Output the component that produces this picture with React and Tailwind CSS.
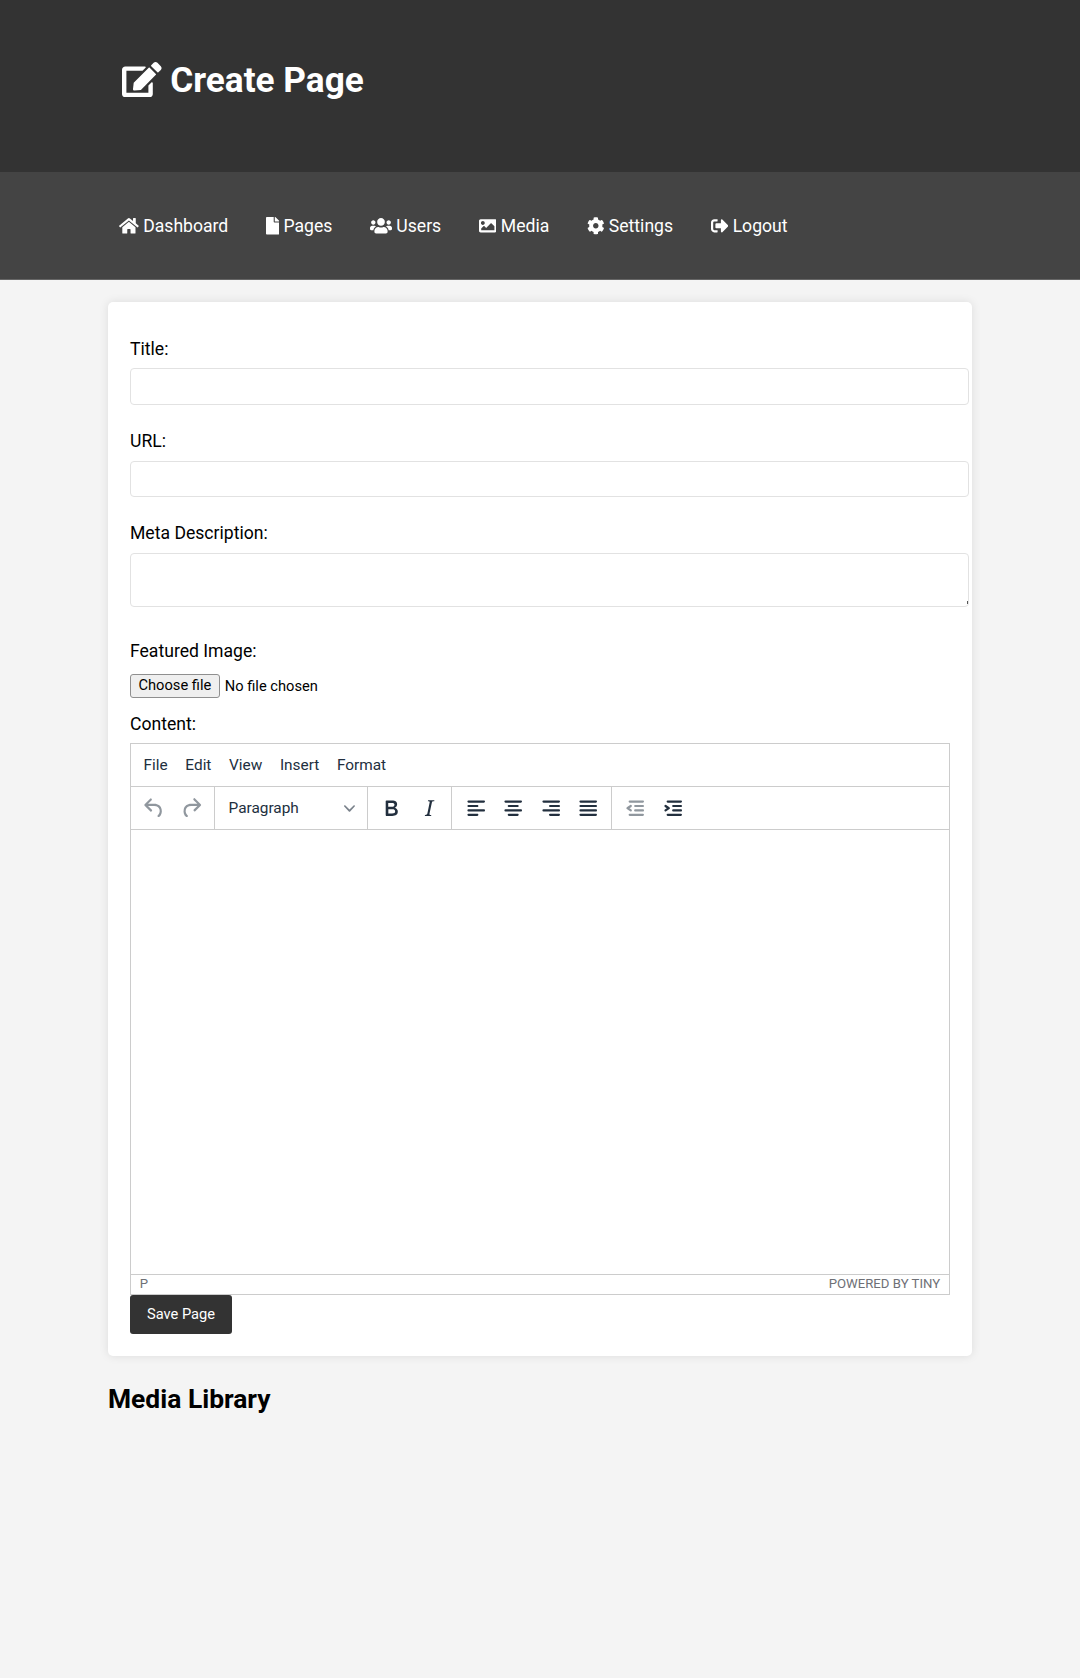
import React from 'react'
import { FaEdit, FaHome, FaFile, FaUsers, FaImage, FaCog, FaSignOutAlt } from 'react-icons/fa'

const navItems = [
  { icon: <FaHome className="h-[17.6px] w-[19.8px]" />, label: 'Dashboard' },
  { icon: <FaFile className="h-[17.6px] w-[13.2px]" />, label: 'Pages' },
  { icon: <FaUsers className="h-[17.6px] w-[22px]" />, label: 'Users' },
  { icon: <FaImage className="h-[17.6px] w-[17.6px]" />, label: 'Media' },
  { icon: <FaCog className="h-[17.6px] w-[17.6px]" />, label: 'Settings' },
  { icon: <FaSignOutAlt className="h-[17.6px] w-[17.6px]" />, label: 'Logout' },
]

const menuItems = ['File', 'Edit', 'View', 'Insert', 'Format']

// TinyMCE toolbar icons
const paths = {
  undo: 'M6.4 8H12c3.7 0 6.2 2 6.8 5.1.6 2.7-.4 5.6-2.3 6.8a1 1 0 0 1-1-1.8c1.1-.6 1.8-2.7 1.4-4.6-.5-2.1-2.1-3.5-4.9-3.5H6.4l3.3 3.3a1 1 0 1 1-1.4 1.4l-5-5a1 1 0 0 1 0-1.4l5-5a1 1 0 0 1 1.4 1.4L6.4 8Z',
  redo: 'M17.6 10H12c-2.8 0-4.4 1.4-4.9 3.5-.4 2 .3 4 1.4 4.6a1 1 0 1 1-1 1.8c-2-1.2-2.9-4.1-2.3-6.8.6-3 3-5.1 6.8-5.1h5.6l-3.3-3.3a1 1 0 1 1 1.4-1.4l5 5a1 1 0 0 1 0 1.4l-5 5a1 1 0 0 1-1.4-1.4l3.3-3.3Z',
  bold: 'M7.8 19c-.3 0-.5 0-.6-.2l-.2-.5V5.7c0-.2 0-.4.2-.5l.6-.2h5c1.5 0 2.7.3 3.5 1 .7.6 1.1 1.4 1.1 2.5a3 3 0 0 1-.6 1.9c-.4.6-1 1-1.6 1.2.4.1.9.3 1.3.6s.8.7 1 1.2c.4.4.5 1 .5 1.6 0 1.3-.4 2.3-1.3 3-.8.7-2.1 1-3.8 1H7.8Zm5-8.3c.6 0 1.2-.1 1.6-.5.4-.3.6-.7.6-1.3 0-1.1-.8-1.7-2.3-1.7H9.3v3.5h3.4Zm.5 6c.7 0 1.3-.1 1.7-.4.4-.4.6-.9.6-1.5s-.2-1-.7-1.4c-.4-.3-1-.4-2-.4H9.4v3.8h4Z',
  italic: 'M16.7 4.7l-.1.9h-.3c-.6 0-1 0-1.4.3-.3.3-.4.6-.5 1.1l-2.1 9.8v.6c0 .5.4.8 1.4.8h.2l-.2.8H8l.2-.8h.2c1.1 0 1.8-.5 2-1.5l2-9.8.1-.5c0-.6-.4-.8-1.4-.8h-.3l.2-.9h5.8Z',
  alignLeft: 'M5 5h14c.6 0 1 .4 1 1s-.4 1-1 1H5a1 1 0 1 1 0-2Zm0 4h8c.6 0 1 .4 1 1s-.4 1-1 1H5a1 1 0 1 1 0-2Zm0 8h8c.6 0 1 .4 1 1s-.4 1-1 1H5a1 1 0 0 1 0-2Zm0-4h14c.6 0 1 .4 1 1s-.4 1-1 1H5a1 1 0 0 1 0-2Z',
  alignCenter: 'M5 5h14c.6 0 1 .4 1 1s-.4 1-1 1H5a1 1 0 1 1 0-2Zm3 4h8c.6 0 1 .4 1 1s-.4 1-1 1H8a1 1 0 1 1 0-2Zm0 8h8c.6 0 1 .4 1 1s-.4 1-1 1H8a1 1 0 0 1 0-2Zm-3-4h14c.6 0 1 .4 1 1s-.4 1-1 1H5a1 1 0 0 1 0-2Z',
  alignRight: 'M5 5h14c.6 0 1 .4 1 1s-.4 1-1 1H5a1 1 0 1 1 0-2Zm6 4h8c.6 0 1 .4 1 1s-.4 1-1 1h-8a1 1 0 0 1 0-2Zm0 8h8c.6 0 1 .4 1 1s-.4 1-1 1h-8a1 1 0 0 1 0-2Zm-6-4h14c.6 0 1 .4 1 1s-.4 1-1 1H5a1 1 0 0 1 0-2Z',
  justify: 'M5 5h14c.6 0 1 .4 1 1s-.4 1-1 1H5a1 1 0 1 1 0-2Zm0 4h14c.6 0 1 .4 1 1s-.4 1-1 1H5a1 1 0 1 1 0-2Zm0 4h14c.6 0 1 .4 1 1s-.4 1-1 1H5a1 1 0 0 1 0-2Zm0 4h14c.6 0 1 .4 1 1s-.4 1-1 1H5a1 1 0 0 1 0-2Z',
  outdent: 'M7 5h12c.6 0 1 .4 1 1s-.4 1-1 1H7a1 1 0 1 1 0-2Zm5 4h7c.6 0 1 .4 1 1s-.4 1-1 1h-7a1 1 0 0 1 0-2Zm0 4h7c.6 0 1 .4 1 1s-.4 1-1 1h-7a1 1 0 0 1 0-2Zm-5 4h12a1 1 0 0 1 0 2H7a1 1 0 0 1 0-2Zm1.6-3.8a1 1 0 0 1-1.2 1.6l-3-2a1 1 0 0 1 0-1.6l3-2a1 1 0 0 1 1.2 1.6L6.8 12l1.8 1.2Z',
  indent: 'M7 5h12c.6 0 1 .4 1 1s-.4 1-1 1H7a1 1 0 1 1 0-2Zm5 4h7c.6 0 1 .4 1 1s-.4 1-1 1h-7a1 1 0 0 1 0-2Zm0 4h7c.6 0 1 .4 1 1s-.4 1-1 1h-7a1 1 0 0 1 0-2Zm-5 4h12a1 1 0 0 1 0 2H7a1 1 0 0 1 0-2Zm-2.6-3.8L6.2 12l-1.8-1.2a1 1 0 0 1 1.2-1.6l3 2a1 1 0 0 1 0 1.6l-3 2a1 1 0 1 1-1.2-1.6Z',
}

const ToolButton = ({ name, disabled }) => (
  <button type="button" className="flex h-[34px] w-[34px] items-center justify-center">
    <svg viewBox="0 0 24 24" className={`h-[26.4px] w-[26.4px] shrink-0 ${disabled ? 'fill-[#222f3e]/50' : 'fill-[#222f3e]'}`}>
      <path d={paths[name]} />
    </svg>
  </button>
)

const inputClass = 'block w-[839px] rounded-[4px] border border-[#e2e2e2] bg-white'

const App = () => {
  return (
    <div className="min-h-[1678px] bg-[#f4f4f4] font-['Roboto',sans-serif] text-black">
      <header className="h-[172px] bg-[#333333] pl-[122px] pt-[58px] text-white">
        <h1 className="flex items-center gap-[8.7px] text-[35.2px] font-bold leading-[42px]">
          <FaEdit className="h-[35.2px] w-[39.6px]" />
          <span className="mt-[1px]">Create Page</span>
        </h1>
      </header>

      <nav className="flex h-[108px] items-start gap-[37.6px] border-b border-[#666666] bg-[#444444] pl-[119px] pt-[43px] text-white">
        {navItems.map((item) => (
          <a key={item.label} className="flex items-center gap-[4.4px] text-[17.6px] leading-[21px]">
            {item.icon}
            <span className="mt-[1px]">{item.label}</span>
          </a>
        ))}
      </nav>

      <main className="mx-[108px] pt-[22px]">
        <form className="h-[1054px] rounded-[5px] bg-white p-[22px] shadow-[0_0_10px_rgba(0,0,0,0.1)]">
          <label className="block pt-[15px] text-[17.6px] leading-[21px]">Title:</label>
          <input className={`${inputClass} mt-[8px] h-[37px]`} />

          <label className="mt-[26px] block text-[17.6px] leading-[21px]">URL:</label>
          <input className={`${inputClass} mt-[9px] h-[36px]`} />

          <label className="mt-[26px] block text-[17.6px] leading-[21px]">Meta Description:</label>
          <div className="relative mt-[9px] w-[839px]">
            <textarea className={`${inputClass} h-[54px] resize-none`} />
            <span className="absolute bottom-[3px] right-[1px] h-[3px] w-[1px] bg-[#555555]" />
          </div>

          <label className="mt-[34px] block text-[17.6px] leading-[21px]">Featured Image:</label>
          <div className="mt-[12px] flex h-[24px] items-center pb-[1px] text-[14.67px]">
            <button type="button" className="h-[24px] shrink-0 rounded-[3px] border border-[#8f8f8f] bg-[#efefef] px-[7.5px] pb-[2px] text-[14.67px] leading-[20px]">
              Choose file
            </button>
            <span className="ml-[5px]">No file chosen</span>
          </div>

          <label className="mt-[16px] block text-[17.6px] leading-[21px]">Content:</label>

          <div className="mt-[8px] w-[820px] border border-[#cccccc] text-[#222f3e]">
            <div className="flex h-[43px] items-center gap-[17.6px] border-b border-[#cccccc] pl-[12.6px] pt-[1px] text-[15.4px]">
              {menuItems.map((m) => (
                <span key={m}>{m}</span>
              ))}
            </div>
            <div className="flex h-[43px] items-center border-b border-[#cccccc]">
              <div className="flex h-full items-center gap-[3.5px] border-r border-[#cccccc] pl-[6px] pr-[5px]">
                <ToolButton name="undo" disabled />
                <ToolButton name="redo" disabled />
              </div>
              <div className="flex h-full w-[153px] items-center justify-between border-r border-[#cccccc] pl-[14px] pr-[12px] pt-[1px] text-[15.4px]">
                <span>Paragraph</span>
                <svg viewBox="0 0 10 10" className="h-[11px] w-[11px] fill-[#222f3e]/60">
                  <path d="M8.7 2.2c.3-.3.8-.3 1 0 .4.2.4.7 0 1L5.6 7.8c-.3.3-.9.3-1.2 0L.2 3.2c-.3-.3-.3-.8 0-1 .3-.3.8-.3 1.1 0L5 6l3.7-3.8Z" />
                </svg>
              </div>
              <div className="flex h-full items-center gap-[3.5px] border-r border-[#cccccc] pl-[7px] pr-[5px]">
                <ToolButton name="bold" />
                <ToolButton name="italic" />
              </div>
              <div className="flex h-full items-center gap-[3.5px] border-r border-[#cccccc] pl-[7px] pr-[5px]">
                <ToolButton name="alignLeft" />
                <ToolButton name="alignCenter" />
                <ToolButton name="alignRight" />
                <ToolButton name="justify" />
              </div>
              <div className="flex h-full items-center gap-[3.5px] pl-[7px] pr-[5px]">
                <ToolButton name="outdent" disabled />
                <ToolButton name="indent" />
              </div>
            </div>
            <div className="h-[444px]" />
            <div className="flex h-[20px] items-center justify-between border-t border-[#cccccc] px-[8.8px] pb-[2px] text-[13.2px] text-[#6e7076]">
              <span>P</span>
              <span>POWERED BY TINY</span>
            </div>
          </div>

          <button type="button" className="block h-[39px] w-[102px] rounded-[3px] bg-[#333333] pb-[1px] text-[14.67px] text-white">
            Save Page
          </button>
        </form>

        <h2 className="mt-[26px] text-[26.4px] font-bold leading-[34px]">Media Library</h2>
      </main>
    </div>
  )
}

export default App
